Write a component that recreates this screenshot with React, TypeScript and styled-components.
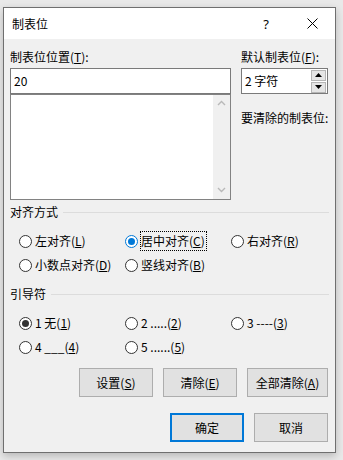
import React from 'react';
import styled, { createGlobalStyle } from 'styled-components';

const Global = createGlobalStyle`
  html, body { margin: 0; padding: 0; background: #e9e9e9; }
  body {
    font-family: "Noto Sans CJK SC", "Noto Sans", sans-serif;
    font-size: 12px;
    color: #000;
  }
  * { box-sizing: border-box; }
`;

const Page = styled.div`
  width: 343px;
  height: 460px;
  overflow: hidden;
  background: #e9e9e9;
  padding: 7px 0 0 3px;
`;

const Dialog = styled.div`
  width: 333px;
  height: 446px;
  border: 1px solid #6f6f6f;
  background: #f0f0f0;
  box-shadow: 0 3px 8px rgba(0, 0, 0, 0.22);
  display: flex;
  flex-direction: column;
`;

const TitleBar = styled.div`
  height: 31px;
  background: #fff;
  display: flex;
  align-items: center;
  padding-left: 8px;
`;

const Title = styled.div`
  flex: 1;
  line-height: 16px;
`;

const CaptionButton = styled.div`
  width: 46px;
  height: 31px;
  display: flex;
  align-items: center;
  justify-content: center;
  font-family: "Noto Sans", sans-serif;
  font-size: 13px;
`;

const Body = styled.div`
  flex: 1;
  display: flex;
  flex-direction: column;
  padding: 10px 6px 0 6px;
`;

const TopGrid = styled.div`
  display: grid;
  grid-template-columns: 221px 87px;
  column-gap: 10px;
`;

const Column = styled.div`
  display: flex;
  flex-direction: column;
`;

const Label = styled.div<{ $mt?: number }>`
  line-height: 16px;
  margin-top: ${(p) => p.$mt ?? 0}px;
  margin-bottom: 3px;
  white-space: nowrap;
`;

const TextInput = styled.div`
  height: 26px;
  border: 1px solid #7a7a7a;
  background: #fff;
  padding-left: 3px;
  display: flex;
  align-items: center;
  line-height: 16px;
`;

const ListBox = styled.div`
  height: 106px;
  border: 1px solid #828282;
  background: #fff;
  display: flex;
  justify-content: flex-end;
`;

const ScrollBar = styled.div`
  width: 17px;
  background: #f0f0f0;
  display: flex;
  flex-direction: column;
  justify-content: space-between;
  align-items: center;
  padding: 5px 0 6px;
`;

const SpinBox = styled.div`
  height: 26px;
  border: 1px solid #7a7a7a;
  background: #fff;
  display: flex;
  align-items: center;
  padding-left: 3px;
`;

const SpinText = styled.div`
  flex: 1;
  line-height: 16px;
`;

const SpinButtons = styled.div`
  display: flex;
  flex-direction: column;
  gap: 1px;
  margin-right: 1px;
`;

const SpinButton = styled.div`
  width: 15px;
  height: 11px;
  background: #e5e5e5;
  border: 1px solid #b5b5b5;
  display: flex;
  align-items: center;
  justify-content: center;
`;

const GroupHeader = styled.div<{ $mt: number }>`
  display: flex;
  align-items: center;
  line-height: 16px;
  margin-top: ${(p) => p.$mt}px;
  &::after {
    content: '';
    flex: 1;
    height: 1px;
    background: #dcdcdc;
    margin-left: 5px;
  }
`;

const RadioGrid = styled.div`
  display: grid;
  grid-template-columns: 106px 106px 106px;
  grid-auto-rows: 24px;
  padding-left: 9px;
  margin-top: 9px;
`;

const RadioItem = styled.div`
  display: flex;
  align-items: center;
  white-space: nowrap;
`;

const Circle = styled.span<{ $checked?: boolean; $accent?: boolean }>`
  width: 13px;
  height: 13px;
  border-radius: 50%;
  border: 1px solid ${(p) => (p.$checked && p.$accent ? '#0078d7' : '#333')};
  background: #fff;
  display: flex;
  align-items: center;
  justify-content: center;
  flex: none;
  &::after {
    content: '';
    display: ${(p) => (p.$checked ? 'block' : 'none')};
    width: 7px;
    height: 7px;
    border-radius: 50%;
    background: ${(p) => (p.$accent ? '#0078d7' : '#333')};
  }
`;

const RadioLabel = styled.span<{ $focus?: boolean }>`
  margin-left: 2px;
  border: 1px dotted ${(p) => (p.$focus ? '#000' : 'transparent')};
  line-height: 18px;
  padding-right: 1px;
`;

const ButtonRow = styled.div<{ $mt: number }>`
  display: flex;
  justify-content: flex-end;
  gap: 10px;
  margin-top: ${(p) => p.$mt}px;
  margin-right: 1px;
`;

const Button = styled.div<{ $w: number; $h: number; $default?: boolean }>`
  width: ${(p) => p.$w}px;
  height: ${(p) => p.$h}px;
  background: #e1e1e1;
  border: ${(p) => (p.$default ? '2px solid #0078d7' : '1px solid #adadad')};
  display: flex;
  align-items: center;
  justify-content: center;
  line-height: 16px;
  white-space: nowrap;
`;

const Chevron = ({ up }: { up?: boolean }) => (
  <svg width="9" height="6" viewBox="0 0 9 6">
    <path
      d={up ? 'M1 5 L4.5 1.5 L8 5' : 'M1 1 L4.5 4.5 L8 1'}
      fill="none"
      stroke="#b9b9b9"
      strokeWidth="1.4"
    />
  </svg>
);

const Tri = ({ up }: { up?: boolean }) => (
  <svg width="7" height="4" viewBox="0 0 7 4">
    <path d={up ? 'M0 4 L3.5 0 L7 4 Z' : 'M0 0 L3.5 4 L7 0 Z'} fill="#000" />
  </svg>
);

const CloseIcon = () => (
  <svg width="11" height="11" viewBox="0 0 11 11">
    <path d="M0.5 0.5 L10.5 10.5 M10.5 0.5 L0.5 10.5" stroke="#000" strokeWidth="1" />
  </svg>
);

type R = { label: React.ReactNode; checked?: boolean; accent?: boolean; focus?: boolean };

const Radio = ({ label, checked, accent, focus }: R) => (
  <RadioItem>
    <Circle $checked={checked} $accent={accent} />
    <RadioLabel $focus={focus}>{label}</RadioLabel>
  </RadioItem>
);

export default function App() {
  return (
    <Page>
      <Global />
      <Dialog>
        <TitleBar>
          <Title>制表位</Title>
          <CaptionButton>?</CaptionButton>
          <CaptionButton>
            <CloseIcon />
          </CaptionButton>
        </TitleBar>
        <Body>
          <TopGrid>
            <Column>
              <Label>
                制表位位置(<u>T</u>):
              </Label>
              <TextInput>20</TextInput>
              <ListBox>
                <ScrollBar>
                  <Chevron up />
                  <Chevron />
                </ScrollBar>
              </ListBox>
            </Column>
            <Column>
              <Label>
                默认制表位(<u>F</u>):
              </Label>
              <SpinBox>
                <SpinText>2 字符</SpinText>
                <SpinButtons>
                  <SpinButton>
                    <Tri up />
                  </SpinButton>
                  <SpinButton>
                    <Tri />
                  </SpinButton>
                </SpinButtons>
              </SpinBox>
              <Label $mt={16}>要清除的制表位:</Label>
            </Column>
          </TopGrid>

          <GroupHeader $mt={4}>对齐方式</GroupHeader>
          <RadioGrid>
            <Radio label={<>左对齐(<u>L</u>)</>} />
            <Radio label={<>居中对齐(<u>C</u>)</>} checked accent focus />
            <Radio label={<>右对齐(<u>R</u>)</>} />
            <Radio label={<>小数点对齐(<u>D</u>)</>} />
            <Radio label={<>竖线对齐(<u>B</u>)</>} />
          </RadioGrid>

          <GroupHeader $mt={9}>引导符</GroupHeader>
          <RadioGrid>
            <Radio label={<>1 无(<u>1</u>)</>} checked />
            <Radio label={<>2 .....(<u>2</u>)</>} />
            <Radio label={<>3 ----(<u>3</u>)</>} />
            <Radio label={<>4 ___(<u>4</u>)</>} />
            <Radio label={<>5 ......(<u>5</u>)</>} />
          </RadioGrid>

          <ButtonRow $mt={9}>
            <Button $w={74} $h={29}>
              设置(<u>S</u>)
            </Button>
            <Button $w={74} $h={29}>
              清除(<u>E</u>)
            </Button>
            <Button $w={81} $h={29}>
              全部清除(<u>A</u>)
            </Button>
          </ButtonRow>
          <ButtonRow $mt={16}>
            <Button $w={74} $h={29} $default>
              确定
            </Button>
            <Button $w={74} $h={29}>
              取消
            </Button>
          </ButtonRow>
        </Body>
      </Dialog>
    </Page>
  );
}
